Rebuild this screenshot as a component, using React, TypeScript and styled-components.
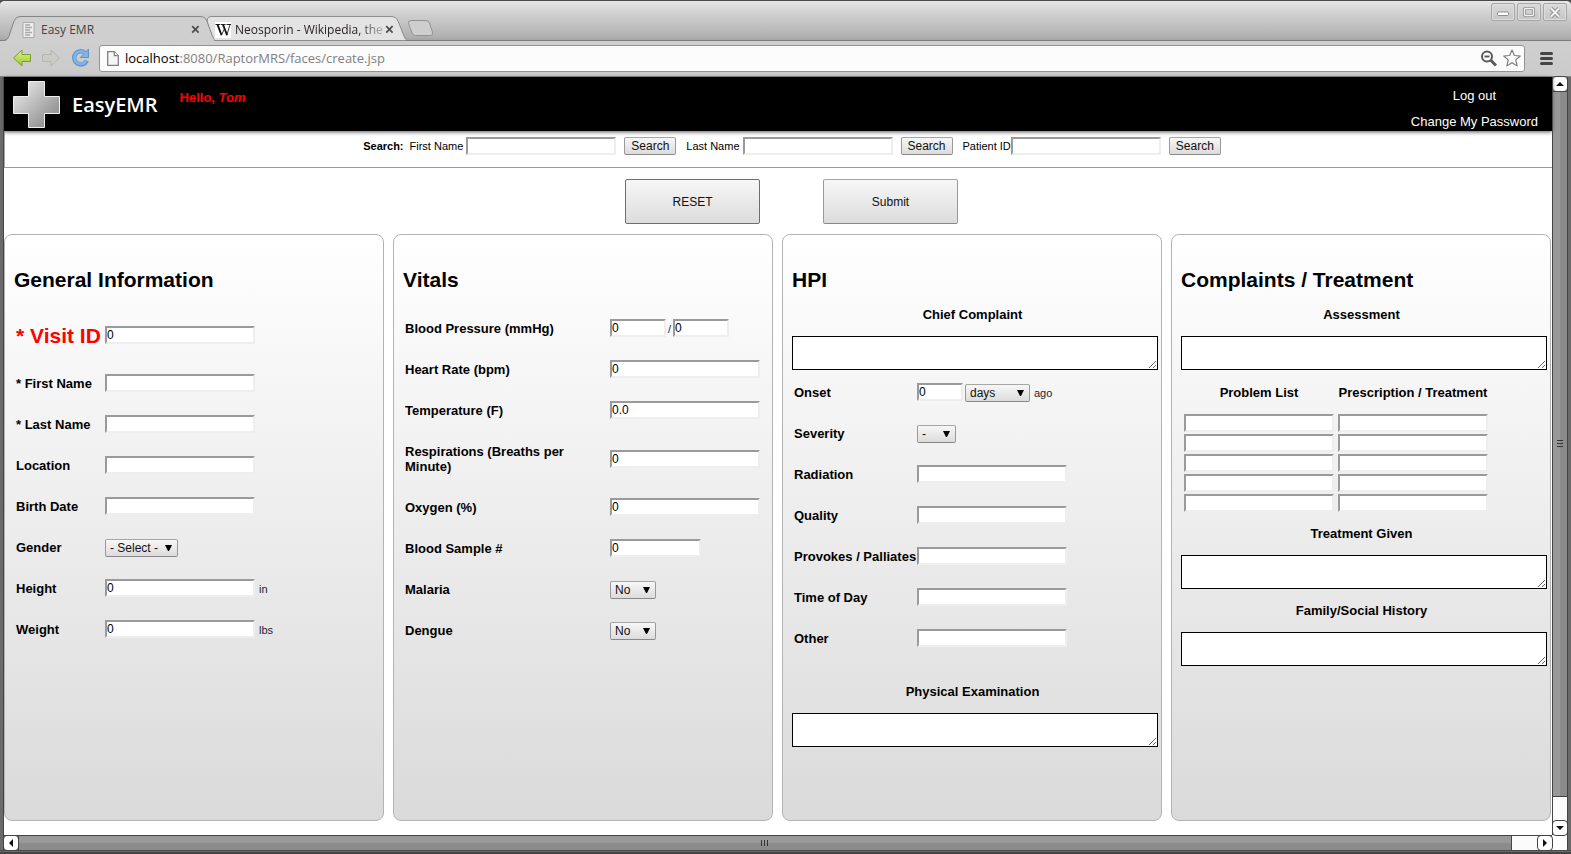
import React from "react";
import styled, { createGlobalStyle, css } from "styled-components";

const sans = `"Liberation Sans", Arial, Helvetica, sans-serif`;
const uiSans = `"Open Sans", "Noto Sans", sans-serif`;

const GlobalStyle = createGlobalStyle`
  *, *::before, *::after { box-sizing: border-box; }
  body { margin: 0; background: #4b4b4b; font-family: ${sans}; font-size: 11px; color: #000; }
  button, input, select, textarea { font-family: inherit; margin: 0; }
`;

/* ---------- window frame ---------- */

const WindowFrame = styled.div`
  min-height: 100vh;
  display: flex;
  flex-direction: column;
  border-top: 1px solid #4a4a4a;
  border-radius: 5px 5px 0 0;
  overflow: hidden;
  background: #cdcdcd;
`;

const TabStrip = styled.div`
  height: 40px;
  display: flex;
  align-items: flex-end;
  padding: 0 4px;
  background: linear-gradient(#e6e6e6, #d2d2d2 30%, #b2b2b2 90%, #a4a4a4);
  border-bottom: 1px solid #7d7d7d;
`;

const Tab = styled.div<{ $active?: boolean }>`
  position: relative;
  z-index: ${(p) => (p.$active ? 1 : 0)};
  width: ${(p) => (p.$active ? 210 : 200)}px;
  height: 25px;
  margin-bottom: -1px;
  margin-left: ${(p) => (p.$active ? 0 : -8)}px;
  padding: 2px ${(p) => (p.$active ? 14 : 12)}px 0 ${(p) => (p.$active ? 18 : 9)}px;
  display: flex;
  align-items: center;
`;

const TabShape = styled.svg`
  position: absolute;
  inset: 0;
  width: 100%;
  height: 100%;
`;

const TabTitle = styled.span<{ $fade?: boolean }>`
  position: relative;
  flex: 1;
  padding-left: ${(p) => (p.$fade ? 4 : 6)}px;
  white-space: nowrap;
  font: 12px/18px ${uiSans};
  color: ${(p) => (p.$fade ? "#2a2222" : "#444")};
  ${(p) => p.$fade && css`mask-image: linear-gradient(90deg, #000 82%, rgba(0, 0, 0, 0.2));`}
`;

const PlainButton = styled.button`
  position: relative;
  display: flex;
  padding: 0;
  border: 0;
  background: none;
`;

const TabIcon = styled.svg`
  position: relative;
  flex: none;
`;

const WindowControls = styled.div`
  align-self: flex-start;
  margin-left: auto;
  padding-top: 2px;
  display: flex;
  gap: 2px;
`;

const WindowControl = styled.button`
  width: 24px;
  height: 18px;
  padding: 0;
  display: grid;
  place-items: center;
  border: 1px solid #a5a5a5;
  border-radius: 2px;
  background: linear-gradient(#dadada, #c6c6c6);
  box-shadow: inset 0 0 0 1px #dedede;
`;

const Toolbar = styled.div`
  height: 36px;
  display: flex;
  align-items: center;
  padding: 0 18px 0 12px;
  border-bottom: 1px solid #868686;
  background: linear-gradient(#cfcfcf, #cbcbcb);
`;

const NavButtons = styled.div`
  display: flex;
  gap: 9px;
  margin-right: 7px;
  padding-bottom: 1px;
`;

const AddressBox = styled.div`
  flex: 1;
  height: 27px;
  display: flex;
  align-items: center;
  gap: 6px;
  margin-right: 15px;
  padding: 0 3px 1px 7px;
  border: 1px solid #929292;
  border-radius: 3px;
  background: #fcfcfc;
`;

const Address = styled.div`
  flex: 1;
  font: 13px/20px ${uiSans};
  color: #808080;
  b { font-weight: 400; color: #000; }
`;

/* ---------- scroll bars ---------- */

const Viewport = styled.div`
  flex: 1;
  display: grid;
  grid-template-columns: minmax(0, 1fr) 15px;
  grid-template-rows: 1fr 15px;
  margin: 0 4px;
  background: #fff;
  box-shadow: -1px 0 #444, 1px 0 #444, -4px 0 #6a6a6a, 4px 0 #6a6a6a;
`;

const BottomFrame = styled.div`
  height: 4px;
  background: linear-gradient(#4a4a4a 25%, #6a6a6a 25%, #6a6a6a 60%, #444 60%);
`;

const ScrollBar = styled.div<{ $vertical?: boolean }>`
  display: flex;
  flex-direction: ${(p) => (p.$vertical ? "column" : "row")};
  background: #fbfbfb;
  border: 1px solid #444;
  border-width: ${(p) => (p.$vertical ? "0 0 0 1px" : "1px 0 0 0")};
`;

const ScrollArrow = styled.button`
  flex: none;
  width: 14px;
  height: 14px;
  padding: 0;
  display: grid;
  place-items: center;
  border: 0;
  border-radius: 3px;
  background: #fff;
  outline: 1px solid #444;
`;

const ScrollThumb = styled.div<{ $vertical?: boolean; $share: number }>`
  flex: ${(p) => p.$share};
  display: grid;
  place-items: center;
  border: 1px solid #444;
  border-width: ${(p) => (p.$vertical ? "1px 0" : "0 1px")};
  background: linear-gradient(${(p) => (p.$vertical ? "90deg" : "180deg")}, #999 50%, #8b8b8b 50%);
`;

const ScrollGap = styled.div<{ $share: number }>`
  flex: ${(p) => p.$share};
`;

/* ---------- page ---------- */

const Page = styled.div`
  display: flex;
  flex-direction: column;
  background: #fff;
`;

const Header = styled.header`
  position: relative;
  height: 54px;
  display: flex;
  padding: 3px 14px 0 8px;
  background: #000;
  box-shadow: 0 1px 4px #555;
`;

const Brand = styled.div`
  display: flex;
  align-items: center;
  gap: 11px;
  height: 49px;
  color: #fff;
  font: 600 20px/28px ${uiSans};
`;

const Greeting = styled.div`
  margin: 10px 0 0 22px;
  font-size: 13px;
  line-height: 15px;
  font-weight: 700;
  color: #f00;
`;

const AccountLinks = styled.nav`
  margin-left: auto;
  padding-top: 3px;
  display: flex;
  flex-direction: column;
  align-items: center;
`;

const AccountLink = styled.a`
  font-size: 13px;
  line-height: 26px;
  color: #fff;
  text-decoration: none;
`;

const SearchBar = styled.div`
  height: 37px;
  display: flex;
  justify-content: center;
  align-items: flex-start;
  gap: 10px;
  padding: 6px 0 0 27px;
  border-left: 1px solid #aaa;
  border-bottom: 1px solid #999;
  line-height: 18px;
`;

const SearchTitle = styled.b`
  margin-right: -4px;
`;

const SearchField = styled.form<{ $tight?: boolean }>`
  display: flex;
  gap: 8px;
  label { margin-right: ${(p) => (p.$tight ? -8 : -5)}px; }
`;

const TextInput = styled.input<{ $width?: number }>`
  width: ${(p) => p.$width ?? 150}px;
  height: 18px;
  padding: 0;
  border: 2px solid;
  border-color: #9a9a9a #eee #eee #9a9a9a;
  border-radius: 0;
  background: #fff;
  color: #000;
  font-size: 12px;
  line-height: 14px;
`;

const buttonFace = css`
  border: 1px solid #9c9c9c;
  border-color: #a6a6a6 #999 #888;
  border-radius: 2px;
  background: linear-gradient(#f7f7f7, #dcdcdc);
  color: #111;
  font-size: 12px;
`;

const SmallButton = styled.button`
  ${buttonFace}
  width: 52px;
  height: 18px;
  padding: 0;
  line-height: 14px;
`;

const ActionRow = styled.div`
  display: flex;
  justify-content: center;
  gap: 63px;
  padding: 11px 0 10px 27px;
`;

const ActionButton = styled.button<{ $strong?: boolean }>`
  ${buttonFace}
  width: 135px;
  height: 45px;
  ${(p) => p.$strong && css`border-color: #6e6e6e;`}
`;

const Panels = styled.main`
  flex: 1;
  display: grid;
  grid-template-columns: repeat(4, minmax(0, 1fr));
  gap: 9px;
  padding: 0 1px 14px 0;
`;

const Panel = styled.section`
  padding: 32px 3px 20px 9px;
  border: 1px solid #b3b3b3;
  border-radius: 8px;
  background: linear-gradient(#fff, #dadada);
`;

const PanelTitle = styled.h2`
  margin: 0;
  font-size: 21px;
  line-height: 26px;
`;

const Rows = styled.div<{ $gap?: number }>`
  padding-top: ${(p) => p.$gap ?? 15}px;
`;

const Row = styled.div<{ $label: number }>`
  display: grid;
  grid-template-columns: ${(p) => p.$label}px 1fr;
  align-items: center;
  padding-left: 2px;
`;

const RowLabel = styled.label<{ $big?: boolean }>`
  padding: 13px 0;
  font-size: 13px;
  line-height: 15px;
  font-weight: 700;
  ${(p) =>
    p.$big &&
    css`
      font-size: 21px;
      line-height: 29px;
      color: #f00;
      white-space: nowrap;
    `}
`;

const Controls = styled.div`
  display: flex;
  align-items: center;
  gap: 2px;
  color: #223;
  input { margin-bottom: 1px; }
`;

const Unit = styled.span`
  padding-left: 2px;
`;

const StackLabel = styled.label`
  display: block;
  margin: 14px 5px 14px 0;
  text-align: center;
  font-size: 13px;
  line-height: 15px;
  font-weight: 700;
`;

const NoteArea = styled.textarea`
  display: block;
  width: 100%;
  height: 34px;
  border: 1px solid #000;
  border-radius: 0;
  background: #fff;
  font-size: 12px;
  resize: both;
`;

const Section = styled.div`
  padding-top: 11px;
`;

const SelectBox = styled.span<{ $width: number }>`
  position: relative;
  width: ${(p) => p.$width}px;
  height: 18px;
  display: block;
  svg { position: absolute; right: 6px; top: 5px; pointer-events: none; }
`;

const NativeSelect = styled.select`
  ${buttonFace}
  display: block;
  width: 100%;
  height: 18px;
  padding: 0 0 0 4px;
  line-height: 16px;
  appearance: none;
`;

const ListTable = styled.table`
  margin: 2px 0 -1px 1px;
  border-collapse: collapse;
  th { padding: 13px 0; font-size: 13px; line-height: 15px; }
  td { padding: 1px 2px; }
  input { display: block; }
`;

/* ---------- pieces ---------- */

function Select({ id, width, options, name }: { id: string; width: number; options: string[]; name?: string }) {
  return (
    <SelectBox $width={width}>
      <NativeSelect id={id} aria-label={name}>
        {options.map((o) => (
          <option key={o}>{o}</option>
        ))}
      </NativeSelect>
      <svg width="7" height="8" viewBox="0 0 7 8" aria-hidden="true">
        <path d="M0 1h7L4 7H3z" fill="#000" />
      </svg>
    </SelectBox>
  );
}

function Field({ id, label, col, big, children }: {
  id: string; label: string; col: number; big?: boolean; children: React.ReactNode;
}) {
  return (
    <Row $label={col}>
      <RowLabel htmlFor={id} $big={big}>{label}</RowLabel>
      <Controls>{children}</Controls>
    </Row>
  );
}

function Note({ id, label }: { id: string; label: string }) {
  return (
    <>
      <StackLabel htmlFor={id}>{label}</StackLabel>
      <NoteArea id={id} />
    </>
  );
}

function CloseTab() {
  return (
    <PlainButton aria-label="Close tab">
      <svg width="9" height="9" viewBox="0 0 9 9">
        <path d="M1.2 1.2l6.4 6.4M7.6 1.2L1.2 7.6" stroke="#4c4c4c" strokeWidth="1.7" />
      </svg>
    </PlainButton>
  );
}

function BrowserTabs() {
  return (
    <TabStrip>
      <Tab $active>
        <TabShape viewBox="0 0 210 25">
          <path d="M0 25C3 24.500 4 23 5 20L10 5Q12 .5 16 .5H196Q201 .5 203 5L208 19Q209.500 23.500 212 24.500V25z" fill="#cfcfcf" />
          <path d="M0 24.500C3 24 4 22.500 5 20L10 5Q12 .5 16 .5H196Q201 .5 203 5L208 19Q209.500 24 213 24.500" fill="none" stroke="#858585" />
        </TabShape>
        <TabIcon width="13" height="16" viewBox="0 0 13 16">
          <path d="M1 .5h11v15H1z" fill="#ededed" stroke="#aaa" />
          <path d="M3 3h5M3 5.500h7M3 8h5M3 10.500h7M3 13h5" stroke="#a8a8a8" strokeWidth="1.300" />
        </TabIcon>
        <TabTitle>Easy EMR</TabTitle>
        <CloseTab />
      </Tab>
      <Tab>
        <TabShape viewBox="0 0 200 25">
          <path d="M9 24.500C6 22 5 18 1.500 8Q0 1 5 .5H185Q190 .5 192 5L198 20Q199 24 202 24.500z" fill="#e3e3e3" stroke="#8d8d8d" />
        </TabShape>
        <TabIcon width="16" height="16" viewBox="0 0 16 16">
          <path d="M0 0h16v16H0z" fill="#fff" />
          <path d="M.5 2.500h4.800M6 2.500h4.500M11.500 2.500H16" stroke="#222" />
          <path d="M2.500 2.500l4 10.500M8 2.500l4 10.500" stroke="#111" strokeWidth="1.900" fill="none" />
          <path d="M6.300 13.500l3-6.500M11.800 13.500L15 2.500" stroke="#222" strokeWidth=".9" fill="none" />
        </TabIcon>
        <TabTitle $fade>Neosporin - Wikipedia, the</TabTitle>
        <CloseTab />
      </Tab>
      <PlainButton aria-label="New tab">
        <svg width="28" height="20" viewBox="0 0 28 20">
          <path d="M5 .5h15q2.500 0 3.500 2.500l3 9q.8 3.500-2 3.500H9.500Q7 15.500 6 13L2.500 3.500Q2 .5 5 .5z" fill="#cecece" stroke="#929292" />
        </svg>
      </PlainButton>
      <WindowControls>
        <WindowControl aria-label="Minimize">
          <svg width="12" height="10"><rect x=".5" y="5" width="11" height="3.500" rx="1" fill="#fff" stroke="#8f8f8f" /></svg>
        </WindowControl>
        <WindowControl aria-label="Maximize">
          <svg width="12" height="10"><rect x="1.500" y="1.500" width="9" height="7" rx="1" fill="none" stroke="#8f8f8f" strokeWidth="3" /><rect x="1.500" y="1.500" width="9" height="7" rx="1" fill="none" stroke="#f3f3f3" strokeWidth="1.300" /></svg>
        </WindowControl>
        <WindowControl aria-label="Close">
          <svg width="12" height="11"><path d="M2 1.500l8 8M10 1.500l-8 8" stroke="#8f8f8f" strokeWidth="4" /><path d="M2 1.500l8 8M10 1.500l-8 8" stroke="#f3f3f3" strokeWidth="2" /></svg>
        </WindowControl>
      </WindowControls>
    </TabStrip>
  );
}

function BrowserToolbar() {
  return (
    <Toolbar>
      <NavButtons>
        <PlainButton aria-label="Back">
          <svg width="20" height="20" viewBox="0 0 20 20">
            <defs><linearGradient id="go" x2="0" y2="1"><stop stopColor="#dff08a" /><stop offset="1" stopColor="#9ccb2c" /></linearGradient></defs>
            <path d="M1.500 10L10 2v4.500h8.500v7H10V18z" fill="url(#go)" stroke="#78a030" strokeLinejoin="round" />
          </svg>
        </PlainButton>
        <PlainButton aria-label="Forward">
          <svg width="20" height="20" viewBox="0 0 20 20">
            <path d="M18.500 10L10 2v4.500H1.500v7H10V18z" fill="#cacac6" stroke="#b5b5b2" strokeLinejoin="round" />
          </svg>
        </PlainButton>
        <PlainButton aria-label="Reload">
          <svg width="22" height="20" viewBox="0 0 22 20">
            <path d="M16.800 12.500A6.600 6.600 0 1 1 15.500 5.200" fill="none" stroke="#5f93cc" strokeWidth="4.400" />
            <path d="M18.500 1v8.500h-8.300z" fill="#82b2e4" stroke="#5f93cc" strokeLinejoin="round" />
            <path d="M16.300 12.500A6.300 6.300 0 1 1 15.300 5.400" fill="none" stroke="#82b2e4" strokeWidth="2.800" />
          </svg>
        </PlainButton>
      </NavButtons>
      <AddressBox>
        <svg width="12" height="15" viewBox="0 0 12 15">
          <path d="M.7.700h6.600l4 4v9.600H.7z" fill="#f6f6f6" stroke="#808080" strokeWidth="1.300" />
          <path d="M7.300.700v4h4" fill="#fff" stroke="#808080" strokeWidth="1.200" />
        </svg>
        <Address><b>localhost</b>:8080/RaptorMRS/faces/create.jsp</Address>
        <PlainButton aria-label="Zoom">
          <svg width="17" height="17" viewBox="0 0 17 17">
            <circle cx="7" cy="6.500" r="5" fill="#fff" stroke="#5a5a5a" strokeWidth="2" />
            <path d="M4.500 6.500h5" stroke="#5a5a5a" strokeWidth="1.800" />
            <path d="M10.500 10l5.500 5.500" stroke="#5a5a5a" strokeWidth="3" />
          </svg>
        </PlainButton>
        <PlainButton aria-label="Bookmark">
          <svg width="18" height="18" viewBox="0 0 18 18">
            <path d="M9 1l2.300 5.500 6 .5-4.600 3.900 1.500 6L9 13.700 3.800 16.900l1.500-6L.7 7l6-.5z" fill="#fff" stroke="#777" strokeWidth="1.100" strokeLinejoin="round" />
          </svg>
        </PlainButton>
      </AddressBox>
      <PlainButton aria-label="Menu">
        <svg width="13" height="13" viewBox="0 0 13 13">
          <path d="M1.500 1.500h10M1.500 6.500h10M1.500 11.500h10" stroke="#454545" strokeWidth="3" strokeLinecap="round" />
        </svg>
      </PlainButton>
    </Toolbar>
  );
}

function Arrow({ d }: { d: string }) {
  return <svg width="8" height="8" viewBox="0 0 8 8"><path d={d} fill="#111" /></svg>;
}

const searches = [
  { id: "s-first", label: "First Name" },
  { id: "s-last", label: "Last Name" },
  { id: "s-patient", label: "Patient ID", tight: true },
];

const plainHpi = [
  { id: "radiation", label: "Radiation" },
  { id: "quality", label: "Quality" },
  { id: "provokes", label: "Provokes / Palliates" },
  { id: "time-of-day", label: "Time of Day" },
  { id: "other", label: "Other" },
];

export default function App() {
  return (
    <WindowFrame>
      <GlobalStyle />
      <BrowserTabs />
      <BrowserToolbar />
      <Viewport>
        <Page>
          <Header>
            <Brand>
              <svg width="49" height="49" viewBox="0 0 49 49">
                <defs><linearGradient id="cross" x2="1" y2="1"><stop offset=".1" stopColor="#e6e6e6" /><stop offset=".9" stopColor="#8a8a8a" /></linearGradient></defs>
                <path d="M16.500 1.500h16v15h15v17h-15v14h-16v-14H1.500v-17h15z" fill="url(#cross)" stroke="#eee" />
              </svg>
              EasyEMR
            </Brand>
            <Greeting>Hello, <em>Tom</em></Greeting>
            <AccountLinks>
              <AccountLink href="#logout">Log out</AccountLink>
              <AccountLink href="#password">Change My Password</AccountLink>
            </AccountLinks>
          </Header>
          <SearchBar>
            <SearchTitle>Search:</SearchTitle>
            {searches.map((s) => (
              <SearchField key={s.id} $tight={s.tight}>
                <label htmlFor={s.id}>{s.label}</label>
                <TextInput id={s.id} />
                <SmallButton type="button">Search</SmallButton>
              </SearchField>
            ))}
          </SearchBar>
          <ActionRow>
            <ActionButton $strong type="button">RESET</ActionButton>
            <ActionButton type="button">Submit</ActionButton>
          </ActionRow>
          <Panels>
            <Panel>
              <PanelTitle>General Information</PanelTitle>
              <Rows>
                <Field id="visit" label="* Visit ID" col={89} big><TextInput id="visit" defaultValue="0" /></Field>
                <Field id="first" label="* First Name" col={89}><TextInput id="first" /></Field>
                <Field id="last" label="* Last Name" col={89}><TextInput id="last" /></Field>
                <Field id="location" label="Location" col={89}><TextInput id="location" /></Field>
                <Field id="birth" label="Birth Date" col={89}><TextInput id="birth" /></Field>
                <Field id="gender" label="Gender" col={89}>
                  <Select id="gender" width={73} options={["- Select -", "Male", "Female"]} />
                </Field>
                <Field id="height" label="Height" col={89}><TextInput id="height" defaultValue="0" /><Unit>in</Unit></Field>
                <Field id="weight" label="Weight" col={89}><TextInput id="weight" defaultValue="0" /><Unit>lbs</Unit></Field>
              </Rows>
            </Panel>
            <Panel>
              <PanelTitle>Vitals</PanelTitle>
              <Rows>
                <Field id="systolic" label="Blood Pressure (mmHg)" col={205}>
                  <TextInput id="systolic" $width={56} defaultValue="0" />
                  <span>/</span>
                  <TextInput $width={56} defaultValue="0" aria-label="Diastolic" />
                </Field>
                <Field id="heart" label="Heart Rate (bpm)" col={205}><TextInput id="heart" defaultValue="0" /></Field>
                <Field id="temp" label="Temperature (F)" col={205}><TextInput id="temp" defaultValue="0.0" /></Field>
                <Field id="resp" label="Respirations (Breaths per Minute)" col={205}><TextInput id="resp" defaultValue="0" /></Field>
                <Field id="oxygen" label="Oxygen (%)" col={205}><TextInput id="oxygen" defaultValue="0" /></Field>
                <Field id="sample" label="Blood Sample #" col={205}><TextInput id="sample" $width={91} defaultValue="0" /></Field>
                <Field id="malaria" label="Malaria" col={205}><Select id="malaria" width={46} options={["No", "Yes"]} /></Field>
                <Field id="dengue" label="Dengue" col={205}><Select id="dengue" width={46} options={["No", "Yes"]} /></Field>
              </Rows>
            </Panel>
            <Panel>
              <PanelTitle>HPI</PanelTitle>
              <Note id="chief" label="Chief Complaint" />
              <Rows $gap={2}>
                <Field id="onset" label="Onset" col={123}>
                  <TextInput id="onset" $width={46} defaultValue="0" />
                  <Select id="onset-unit" name="Onset unit" width={65} options={["days", "weeks", "months"]} />
                  <Unit>ago</Unit>
                </Field>
                <Field id="severity" label="Severity" col={123}><Select id="severity" width={39} options={["-", "1", "2", "3"]} /></Field>
                {plainHpi.map((f) => (
                  <Field key={f.id} id={f.id} label={f.label} col={123}><TextInput id={f.id} /></Field>
                ))}
              </Rows>
              <Section>
                <Note id="physical" label="Physical Examination" />
              </Section>
            </Panel>
            <Panel>
              <PanelTitle>Complaints / Treatment</PanelTitle>
              <Note id="assessment" label="Assessment" />
              <ListTable>
                <thead><tr><th>Problem List</th><th>Prescription / Treatment</th></tr></thead>
                <tbody>
                  {[1, 2, 3, 4, 5].map((n) => (
                    <tr key={n}>
                      <td><TextInput aria-label={`Problem ${n}`} /></td>
                      <td><TextInput aria-label={`Prescription ${n}`} /></td>
                    </tr>
                  ))}
                </tbody>
              </ListTable>
              <Note id="treatment" label="Treatment Given" />
              <Note id="history" label="Family/Social History" />
            </Panel>
          </Panels>
        </Page>
        <ScrollBar $vertical>
          <ScrollArrow aria-label="Scroll up"><Arrow d="M4 2l4 4H0z" /></ScrollArrow>
          <ScrollThumb $vertical $share={705}>
            <svg width="6" height="8"><path d="M0 .5h6M0 3.500h6M0 6.500h6" stroke="#333" /></svg>
          </ScrollThumb>
          <ScrollGap $share={24} />
          <ScrollArrow aria-label="Scroll down"><Arrow d="M4 6L0 2h8z" /></ScrollArrow>
        </ScrollBar>
        <ScrollBar>
          <ScrollArrow aria-label="Scroll left"><Arrow d="M2 4l4-4v8z" /></ScrollArrow>
          <ScrollThumb $share={1493}>
            <svg width="8" height="6"><path d="M.5 0v6M3.500 0v6M6.500 0v6" stroke="#333" /></svg>
          </ScrollThumb>
          <ScrollGap $share={26} />
          <ScrollArrow aria-label="Scroll right"><Arrow d="M6 4L2 0v8z" /></ScrollArrow>
        </ScrollBar>
      </Viewport>
      <BottomFrame />
    </WindowFrame>
  );
}
